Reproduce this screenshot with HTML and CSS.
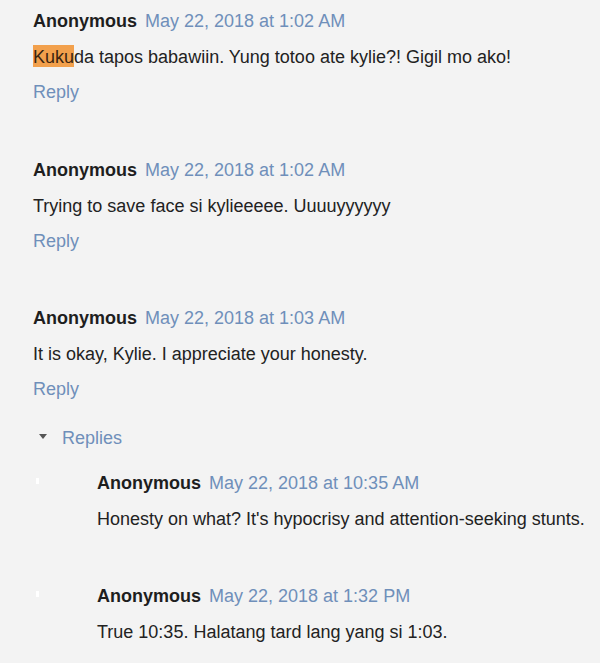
FILE: index.html
```html
<!DOCTYPE html>
<html>
<head>
<meta charset="utf-8">
<link rel="stylesheet" href="styles.css">
</head>
<body>
<div class="thread">
  <div class="comment">
    <div class="head"><span class="name">Anonymous</span><a class="date">May 22, 2018 at 1:02 AM</a></div>
    <div class="body"><span class="hl">Kuku</span>da tapos babawiin. Yung totoo ate kylie?! Gigil mo ako!</div>
    <div class="action"><a>Reply</a></div>
  </div>
  <div class="comment">
    <div class="head"><span class="name">Anonymous</span><a class="date">May 22, 2018 at 1:02 AM</a></div>
    <div class="body">Trying to save face si kylieeeee. Uuuuyyyyyy</div>
    <div class="action"><a>Reply</a></div>
  </div>
  <div class="comment">
    <div class="head"><span class="name">Anonymous</span><a class="date">May 22, 2018 at 1:03 AM</a></div>
    <div class="body">It is okay, Kylie. I appreciate your honesty.</div>
    <div class="action"><a>Reply</a></div>
    <div class="replies-toggle"><span class="tri"></span><a>Replies</a></div>
    <div class="replies">
      <div class="reply">
        <span class="avatar"></span>
        <div class="head"><span class="name">Anonymous</span><a class="date">May 22, 2018 at 10:35 AM</a></div>
        <div class="body">Honesty on what? It's hypocrisy and attention-seeking stunts.</div>
      </div>
      <div class="reply">
        <span class="avatar"></span>
        <div class="head"><span class="name">Anonymous</span><a class="date">May 22, 2018 at 1:32 PM</a></div>
        <div class="body">True 10:35. Halatang tard lang yang si 1:03.</div>
      </div>
    </div>
  </div>
</div>
</body>
</html>
```
FILE: styles.css
```css
html, body {
  margin: 0;
  padding: 0;
  background: #f3f3f3;
}
body {
  font-family: "Liberation Sans", Arial, sans-serif;
  font-size: 18px;
  color: #222;
  width: 600px;
  height: 663px;
  overflow: hidden;
}
.thread {
  padding: 10px 0 0 33px;
}
.comment {
  margin-bottom: 55.5px;
}
.comment:last-child {
  margin-bottom: 0;
}
.head, .body, .action, .replies-toggle {
  line-height: 22px;
  white-space: nowrap;
}
.head {
  margin-bottom: 14px;
}
.body {
  margin-bottom: 13px;
}
.name {
  font-weight: bold;
  color: #1e1e1e;
  margin-right: 8px;
}
a {
  color: #6f8fba;
  text-decoration: none;
}
.hl {
  background: #f2a04c;
  color: #3a2410;
  padding: 2px 0 0;
}
.replies-toggle {
  margin-top: 27px;
  margin-left: 6px;
  display: flex;
  align-items: center;
  gap: 15px;
}
.tri {
  width: 0;
  height: 0;
  border-left: 4px solid transparent;
  border-right: 4px solid transparent;
  border-top: 5px solid #555;
  margin-top: -3px;
}
.replies {
  margin-top: 23px;
  padding-left: 64px;
}
.reply {
  position: relative;
  margin-bottom: 55px;
}
.reply:last-child {
  margin-bottom: 0;
}
.reply .body {
  margin-bottom: 0;
}
.avatar {
  position: absolute;
  left: -61px;
  top: 6px;
  width: 3px;
  height: 6px;
  background: #fff;
}
```
